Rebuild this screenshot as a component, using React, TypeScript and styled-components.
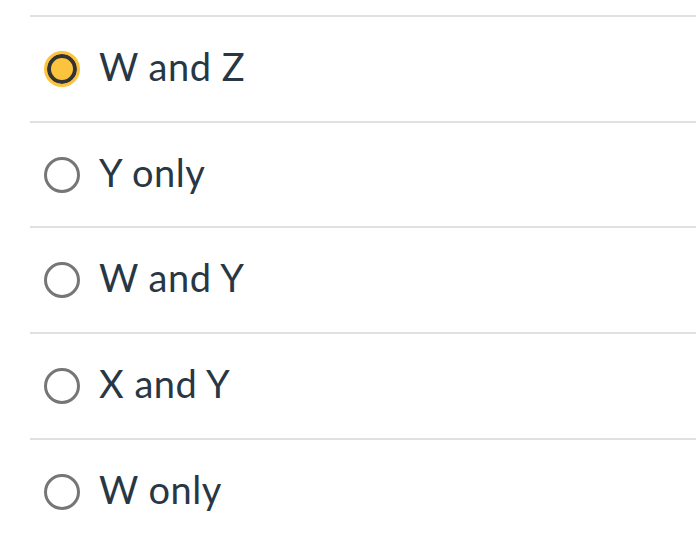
import React, { useState } from 'react';
import styled, { createGlobalStyle } from 'styled-components';

const options = ['W and Z', 'Y only', 'W and Y', 'X and Y', 'W only'];

const App: React.FC = () => {
  const [selected, setSelected] = useState(0);

  return (
    <>
      <GlobalStyle />
      <List>
        {options.map((label, i) => (
          <Row key={label} onClick={() => setSelected(i)}>
            <Radio checked={selected === i} />
            <Label>{label}</Label>
          </Row>
        ))}
      </List>
    </>
  );
};

export default App;

const GlobalStyle = createGlobalStyle`
  html, body {
    margin: 0;
    padding: 0;
    background: #ffffff;
  }
  body {
    font-family: Lato, "Open Sans", sans-serif;
  }
`;

const List = styled.div`
  display: flex;
  flex-direction: column;
  padding: 15px 0 0 30px;
`;

const Row = styled.div`
  display: flex;
  align-items: center;
  gap: 19px;
  box-sizing: border-box;
  height: 105.7px;
  padding: 0 0 0 14px;
  border-top: 2px solid #e0e0e0;
  cursor: pointer;
`;

interface RadioProps {
  checked?: boolean;
}

const Radio = styled.span<RadioProps>`
  flex: none;
  box-sizing: border-box;
  width: 36px;
  height: 36px;
  border-radius: 50%;
  border: 3px solid ${props => (props.checked ? '#fcc43d' : '#767676')};
  background: ${props => (props.checked ? '#fcc43d' : '#ffffff')};
  box-shadow: ${props => (props.checked ? 'inset 0 0 0 4px #333333' : 'none')};
`;

const Label = styled.span`
  font-size: 38px;
  letter-spacing: 0.5px;
  line-height: 1;
  color: #283744;
  margin-bottom: 6px;
`;
